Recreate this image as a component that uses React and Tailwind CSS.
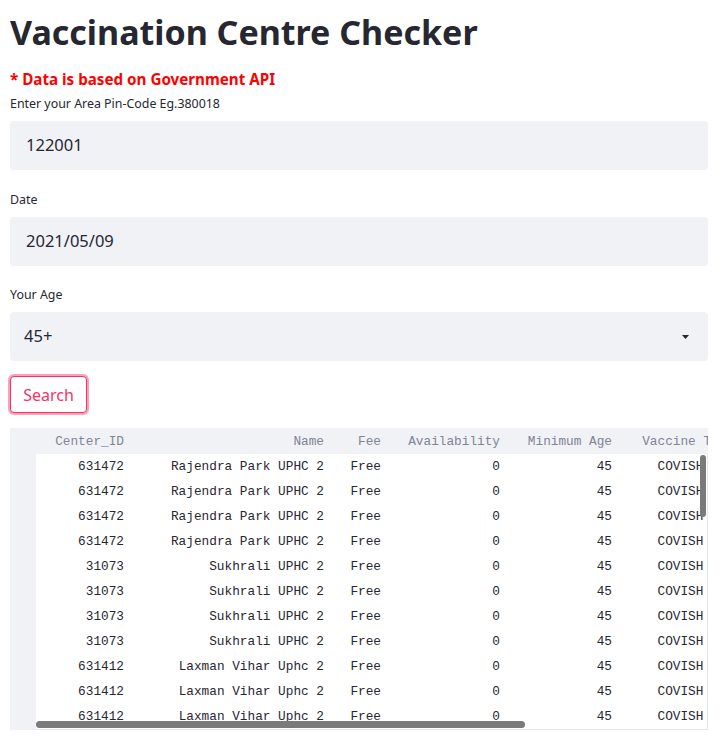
import React from "react";

const rows = [
  ["631472", "Rajendra Park UPHC 2"],
  ["631472", "Rajendra Park UPHC 2"],
  ["631472", "Rajendra Park UPHC 2"],
  ["631472", "Rajendra Park UPHC 2"],
  ["31073", "Sukhrali UPHC 2"],
  ["31073", "Sukhrali UPHC 2"],
  ["31073", "Sukhrali UPHC 2"],
  ["31073", "Sukhrali UPHC 2"],
  ["631412", "Laxman Vihar Uphc 2"],
  ["631412", "Laxman Vihar Uphc 2"],
  ["631412", "Laxman Vihar Uphc 2"],
];

const mono = { fontFamily: '"Liberation Mono", "DejaVu Sans Mono", monospace' };

function Row({ cells, header }) {
  return (
    <div className={`flex h-[25px] items-center whitespace-nowrap text-[12.75px] ${header ? "text-[#808495]" : "text-[#262730]"}`}>
      <div className="w-[100px] shrink-0 pr-3 text-right">{cells[0]}</div>
      <div className="w-[200px] shrink-0 pr-3 text-right">{cells[1]}</div>
      <div className="w-[57px] shrink-0 pr-3 text-right">{cells[2]}</div>
      <div className="w-[119px] shrink-0 pr-3 text-right">{cells[3]}</div>
      <div className="w-[112px] shrink-0 pr-3 text-right">{cells[4]}</div>
      <div className="w-[122px] shrink-0 pr-3 text-right">{cells[5]}</div>
    </div>
  );
}

export default function App() {
  return (
    <div className="w-[727px] h-[738px] overflow-hidden bg-white pl-[10px] pr-[19px] text-[#262730]" style={{ fontFamily: '"Noto Sans", "Open Sans", sans-serif' }}>
      <h1 className="pt-[10px] h-[68px] text-[34px] font-bold leading-[44px] text-[#262730]">Vaccination Centre Checker</h1>
      <div className="h-[22px] flex items-center text-[15.2px] font-bold text-[#ff0000]">* Data is based on Government API</div>
      <div className="h-[28px] flex items-center text-[12.4px]">Enter your Area Pin-Code Eg.380018</div>
      <div className="mt-[3px] h-[49px] rounded-[4px] bg-[#f0f2f6] flex items-center pl-4 text-[16.5px]">122001</div>
      <div className="h-[47px] pb-[7px] flex items-end text-[12.4px]">Date</div>
      <div className="h-[49px] rounded-[4px] bg-[#f0f2f6] flex items-center pl-4 text-[16.5px]">2021/05/09</div>
      <div className="h-[46px] pb-[7px] flex items-end text-[12.4px]">Your Age</div>
      <div className="h-[49px] rounded-[4px] bg-[#f0f2f6] flex items-center justify-between pl-[14px] pr-[19px] text-[16.5px]">
        <span>45+</span>
        <svg width="7" height="4" viewBox="0 0 7 4"><path d="M0 0 L7 0 L3.5 4 Z" fill="#262730" /></svg>
      </div>
      <div className="pt-[15px]">
        <button className="h-[37px] w-[77px] rounded-[4px] border border-[#f63366] bg-white text-[16px] text-[#f63366] ring-2 ring-[#f9a3b9]">Search</button>
      </div>
      <div className="mt-[15px] h-[302px] bg-[#f0f2f6] flex flex-col overflow-hidden" style={mono}>
        <div className="h-[26px] pl-[26px] pt-[1px] flex items-center overflow-hidden">
          <Row header cells={["Center_ID", "Name", "Fee", "Availability", "Minimum Age", "Vaccine Type"]} />
        </div>
        <div className="flex flex-1">
          <div className="w-[26px] shrink-0" />
          <div className="relative flex-1 bg-white border-r border-b border-[#e6e7eb]">
            <div className="absolute inset-y-0 left-0 right-[4px] overflow-hidden">
              {rows.map((r, i) => (
                <Row key={i} cells={[r[0], r[1], "Free", "0", "45", "COVISHIELD"]} />
              ))}
            </div>
            <div className="absolute right-[1px] top-[1px] h-[62px] w-[6px] rounded-full bg-[#7a7a7a]" />
            <div className="absolute left-0 bottom-[1px] h-[7px] w-[489px] rounded-full bg-[#7a7a7a]" />
          </div>
        </div>
      </div>
    </div>
  );
}
